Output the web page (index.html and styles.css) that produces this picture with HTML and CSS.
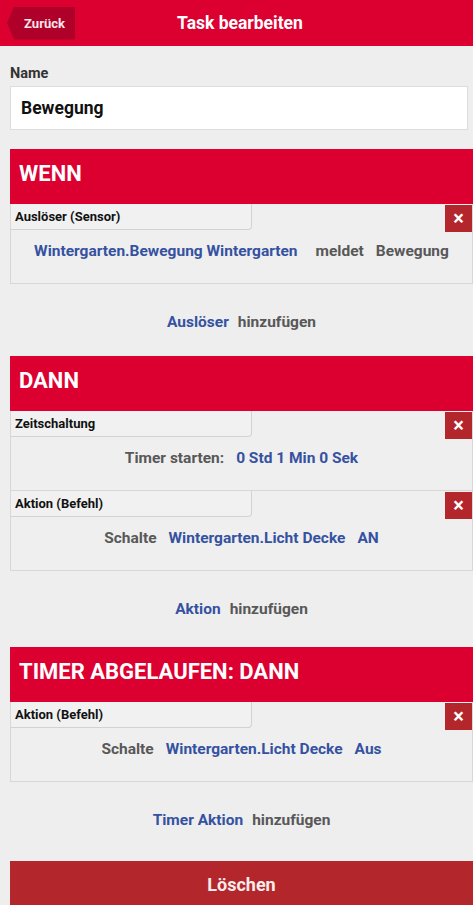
FILE: index.html
```html
<!DOCTYPE html>
<html lang="de">
<head>
    <meta charset="UTF-8">
    <meta name="viewport" content="width=device-width, initial-scale=1.0">
    <title>Task bearbeiten</title>
    <link rel="stylesheet" href="styles.css">
</head>
<body>
<div class="topbar">
    <a class="back-btn" href="#">Zurück</a>
    <div class="topbar-title">Task bearbeiten</div>
</div>

<div class="page">
    <div class="name-field">
        <label for="taskName">Name</label>
        <input type="text" id="taskName" value="Bewegung">
    </div>

    <div class="section">
        <div class="section-head">WENN</div>
        <div class="card">
            <div class="card-top">
                <div class="card-tab">Auslöser (Sensor)</div>
                <button class="remove-btn">&times;</button>
            </div>
            <div class="card-line">
                <span class="val wide">Wintergarten.Bewegung Wintergarten</span>
                <span class="txt">meldet</span>
                <span class="txt">Bewegung</span>
            </div>
        </div>
        <div class="add-row"><span class="val">Auslöser</span><span class="txt">hinzufügen</span></div>
    </div>

    <div class="section">
        <div class="section-head">DANN</div>
        <div class="card">
            <div class="card-top">
                <div class="card-tab">Zeitschaltung</div>
                <button class="remove-btn">&times;</button>
            </div>
            <div class="card-line">
                <span class="txt">Timer starten:</span>
                <span class="val">0 Std 1 Min 0 Sek</span>
            </div>
        </div>
        <div class="card">
            <div class="card-top">
                <div class="card-tab">Aktion (Befehl)</div>
                <button class="remove-btn">&times;</button>
            </div>
            <div class="card-line">
                <span class="txt">Schalte</span>
                <span class="val">Wintergarten.Licht Decke</span>
                <span class="val">AN</span>
            </div>
        </div>
        <div class="add-row"><span class="val">Aktion</span><span class="txt">hinzufügen</span></div>
    </div>

    <div class="section section-timer">
        <div class="section-head">TIMER ABGELAUFEN: DANN</div>
        <div class="card">
            <div class="card-top">
                <div class="card-tab">Aktion (Befehl)</div>
                <button class="remove-btn">&times;</button>
            </div>
            <div class="card-line">
                <span class="txt">Schalte</span>
                <span class="val">Wintergarten.Licht Decke</span>
                <span class="val">Aus</span>
            </div>
        </div>
        <div class="add-row"><span class="val">Timer Aktion</span><span class="txt">hinzufügen</span></div>
    </div>

    <button class="delete-btn">Löschen</button>
</div>
</body>
</html>
```

FILE: styles.css
```css
body {
    margin: 0;
    background-color: #eeeeee;
    font-family: Roboto, "Liberation Sans", Arial, sans-serif;
    color: #111;
}
.topbar {
    display: grid;
    grid-template-columns: 1fr auto 1fr;
    align-items: center;
    height: 46px;
    background-color: #dc0030;
}
.back-btn {
    justify-self: start;
    display: flex;
    align-items: center;
    justify-content: center;
    box-sizing: border-box;
    width: 68px;
    height: 33px;
    margin-left: 7px;
    padding-left: 7px;
    background-color: #ae0029;
    clip-path: polygon(7px 0, 100% 0, 100% 100%, 7px 100%, 0 50%);
    color: #f6e6ea;
    font-size: 13px;
    font-weight: bold;
    text-decoration: none;
}
.topbar-title {
    grid-column: 2;
    padding-left: 7px;
    color: #fff;
    font-size: 17.5px;
    font-weight: bold;
}
.page {
    padding: 0 0 0 10px;
}
.name-field {
    padding-top: 19px;
}
.name-field label {
    display: block;
    margin-bottom: 4px;
    color: #333;
    font-size: 14.5px;
    font-weight: bold;
}
.name-field input {
    display: block;
    box-sizing: border-box;
    width: 458px;
    height: 44px;
    padding: 0 10px;
    border: 1px solid #dcdcdc;
    background: #fff;
    font-family: inherit;
    font-size: 17.5px;
    font-weight: bold;
    color: #111;
    outline: none;
}
.section {
    margin-top: 19px;
}
.section + .section {
    margin-top: 0;
}
.section-timer {
    padding-top: 4px;
}
.section-head {
    height: 55px;
    padding-left: 9px;
    line-height: 50px;
    background-color: #dc0030;
    color: #fff;
    font-size: 22px;
    font-weight: bold;
}
.card {
    border: 1px solid #d7d7d7;
    border-top: none;
    background-color: #efefef;
}
.card-top {
    display: flex;
    justify-content: space-between;
    align-items: flex-start;
    height: 26px;
}
.card-tab {
    box-sizing: border-box;
    width: 241px;
    height: 26px;
    padding: 5px 0 0 4px;
    background-color: #f1f1f1;
    border-right: 1px solid #d2d2d2;
    border-bottom: 1px solid #d2d2d2;
    border-bottom-right-radius: 4px;
    font-size: 13px;
    font-weight: bold;
    color: #111;
}
.remove-btn {
    width: 27px;
    height: 27px;
    margin-top: 1px;
    padding: 0;
    border: none;
    background-color: #b3262b;
    color: #fff;
    font-family: inherit;
    font-size: 20px;
    font-weight: bold;
    line-height: 27px;
    cursor: pointer;
}
.card-line {
    display: flex;
    justify-content: center;
    gap: 12px;
    padding: 12px 0 23px;
    line-height: 18px;
    font-size: 15.5px;
    font-weight: bold;
}
.val {
    color: #3552a1;
}
.txt {
    color: #585858;
}
.wide {
    margin-right: 6px;
}
.add-row {
    display: flex;
    justify-content: center;
    gap: 9px;
    padding: 29px 0 25px;
    line-height: 18px;
    font-size: 15.5px;
    font-weight: bold;
}
.delete-btn {
    display: block;
    width: 100%;
    height: 46px;
    margin-top: 7px;
    border: none;
    background-color: #b3262b;
    color: #fbecec;
    font-family: inherit;
    font-size: 18px;
    font-weight: bold;
    cursor: pointer;
}
```
